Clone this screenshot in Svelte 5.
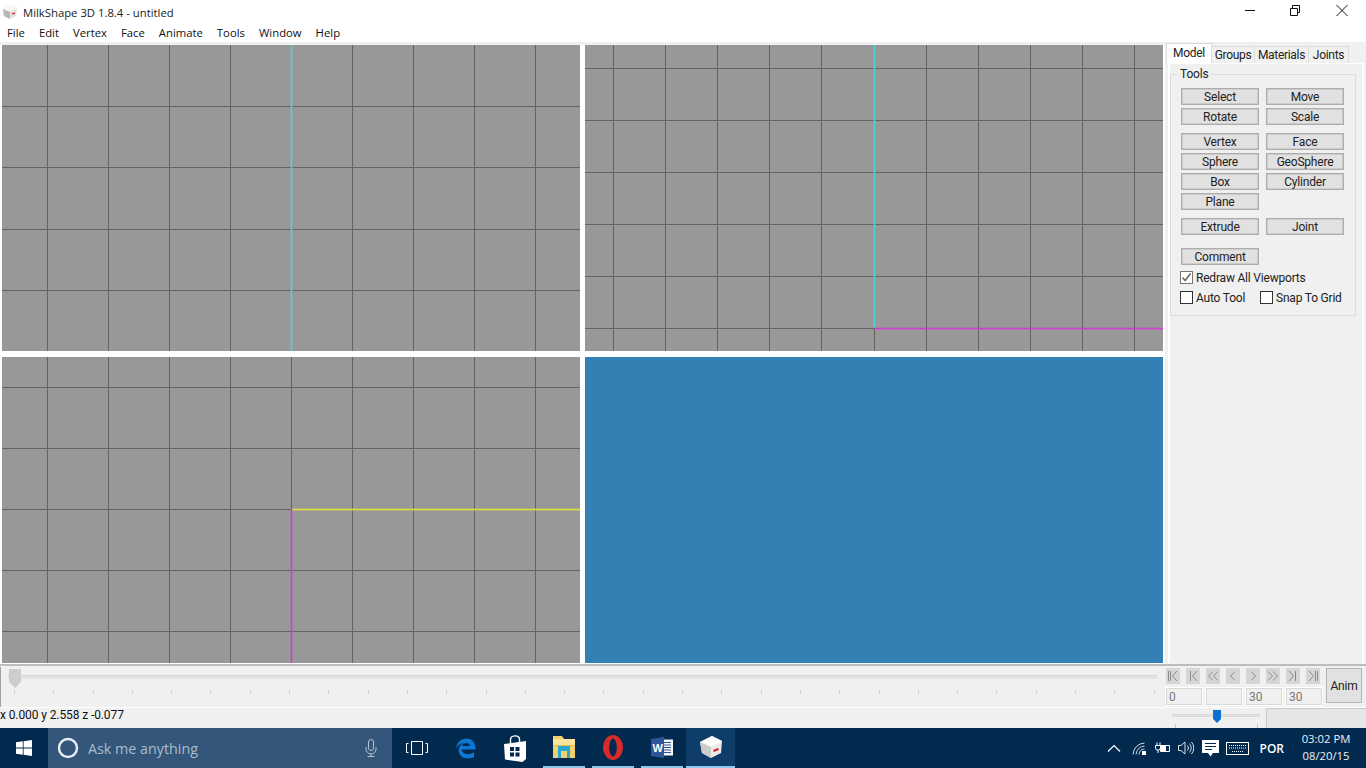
<script>
  const menus = ['File', 'Edit', 'Vertex', 'Face', 'Animate', 'Tools', 'Window', 'Help'];
  const tabs = ['Model', 'Groups', 'Materials', 'Joints'];
  const toolGroups = [
    { gap: 'g0', rows: [['Select', 'Move'], ['Rotate', 'Scale']] },
    { gap: 'g1', rows: [['Vertex', 'Face'], ['Sphere', 'GeoSphere'], ['Box', 'Cylinder'], ['Plane']] },
    { gap: 'g1', rows: [['Extrude', 'Joint']] },
    { gap: 'g2', rows: [['Comment']] }
  ];
  // grid offsets inside each 578x306 viewport, the axis lines are drawn apart
  const sideX = [45, 106, 167, 228, 350, 411, 472, 533];
  const frontX = [28, 80, 132, 184, 236, 341, 393, 445, 497, 549];
  const GRID = '#636363';
  const CYAN = '#4ed2d6';
  const MAGENTA = '#d23ad2';
  const YELLOW = '#e2e23c';
  const transport = ['first', 'prevkey', 'rew', 'prev', 'next', 'ff', 'nextkey', 'last'];
  const ticks = Array.from({ length: 30 }, (_, i) => i);
  const frames = ['0', '', '30', '30'];
</script>

{#snippet axis(x1, y1, x2, y2, color)}
  <line {x1} {y1} {x2} {y2} stroke={color} stroke-width="3" stroke-opacity="0.3" />
  <line {x1} {y1} {x2} {y2} stroke={color} />
{/snippet}

<div class="app">
  <header class="titlebar">
    <svg class="appicon" width="16" height="16" viewBox="0 0 16 16">
      <path d="M1 5 8 1l7 3-1 8-6 3-6-3z" fill="#e4e2e0" />
      <path d="M1 5l7 3 7-4-7-3z" fill="#f8f8f8" />
      <path d="M8 8v7l-6-3-1-7z" fill="#b9b7b5" />
      <path d="M10 10l3-1" stroke="#c44" stroke-width="1.4" />
    </svg>
    <span class="title">MilkShape 3D 1.8.4 - untitled</span>
    <div class="winctl">
      <svg width="46" height="22" viewBox="0 0 46 22"><path d="M18 10.500h10" stroke="#111" /></svg>
      <svg width="46" height="22" viewBox="0 0 46 22" fill="none" stroke="#111"><path d="M17.500 8.500h7v7h-7zM19.500 8.500v-3h7v7h-2" /></svg>
      <svg width="46" height="22" viewBox="0 0 46 22" stroke="#111"><path d="M17.500 5l11 11M28.500 5l-11 11" /></svg>
    </div>
  </header>

  <nav class="menubar">
    {#each menus as m}
      <span>{m}</span>
    {/each}
  </nav>

  <main class="workspace">
    <section class="views">
      <svg class="view" viewBox="0 0 578 306">
        {#each sideX as x}<line x1={x + 0.5} x2={x + 0.5} y1="0" y2="306" stroke={GRID} />{/each}
        {#each [61, 122, 184, 245] as y}<line x1="0" x2="578" y1={y + 0.5} y2={y + 0.5} stroke={GRID} />{/each}
        {@render axis(289.5, 0, 289.5, 306, CYAN)}
      </svg>
      <svg class="view" viewBox="0 0 578 306">
        {#each frontX as x}<line x1={x + 0.5} x2={x + 0.5} y1="0" y2="306" stroke={GRID} />{/each}
        {#each [23, 75, 127, 179, 231] as y}<line x1="0" x2="578" y1={y + 0.5} y2={y + 0.5} stroke={GRID} />{/each}
        <line x1="0" x2="289" y1="283.5" y2="283.5" stroke={GRID} />
        <line x1="289.5" x2="289.5" y1="283" y2="306" stroke={GRID} />
        {@render axis(289.5, 0, 289.5, 283, CYAN)}
        {@render axis(289.5, 283.5, 578, 283.5, MAGENTA)}
      </svg>
      <svg class="view" viewBox="0 0 578 306">
        {#each sideX as x}<line x1={x + 0.5} x2={x + 0.5} y1="0" y2="306" stroke={GRID} />{/each}
        {#each [30, 91, 213, 274] as y}<line x1="0" x2="578" y1={y + 0.5} y2={y + 0.5} stroke={GRID} />{/each}
        <line x1="0" x2="289" y1="152.5" y2="152.5" stroke={GRID} />
        <line x1="289.5" x2="289.5" y1="0" y2="152" stroke={GRID} />
        {@render axis(289.5, 152.5, 578, 152.5, YELLOW)}
        {@render axis(289.5, 152, 289.5, 306, MAGENTA)}
      </svg>
      <div class="view persp"></div>
    </section>

    <aside class="panel">
      <div class="tabs">
        {#each tabs as t, i}
          <span class="tab" class:active={i === 0}>{t}</span>
        {/each}
      </div>
      <div class="page">
        <fieldset class="tools">
          <legend>Tools</legend>
          {#each toolGroups as group}
            <div class="toolgroup {group.gap}">
              {#each group.rows as row}
                <div class="toolrow">
                  {#each row as label}
                    <button>{label}</button>
                  {/each}
                </div>
              {/each}
            </div>
          {/each}
          <label class="check first">
            <span class="box ticked">
              <svg width="11" height="11" viewBox="0 0 11 11"><path d="M1.500 5.500 4.200 8.500 9.500 1.500" fill="none" stroke="#666" stroke-width="1.500" /></svg>
            </span>
            Redraw All Viewports
          </label>
          <div class="checkrow">
            <label class="check"><span class="box"></span>Auto Tool</label>
            <label class="check"><span class="box"></span>Snap To Grid</label>
          </div>
        </fieldset>
      </div>
    </aside>
  </main>

  <section class="timeline">
    <div class="slider">
      <div class="track"></div>
      <svg class="thumb" width="12" height="19" viewBox="0 0 12 19"><path d="M0 0h12v13l-6 6-6-6z" fill="#cdcdcd" /></svg>
      <div class="ticks">
        {#each ticks as t}<i></i>{/each}
      </div>
    </div>
    <div class="transport">
      <div class="keys">
        {#each transport as k}
          <span class="key">
            <svg width="14" height="16" viewBox="0 0 14 16" fill="none" stroke="#8a8a8a">
              {#if k === 'first'}<path d="M2.500 3v10M4.500 3v10M11 3 6.500 8l4.500 5" />
              {:else if k === 'prevkey'}<path d="M4.500 3v10M11 3 6.500 8l4.500 5" />
              {:else if k === 'rew'}<path d="M7 3.500 2.500 8 7 12.500M12 3.500 7.500 8l4.500 4.500" />
              {:else if k === 'prev'}<path d="M9 3.500 4.500 8 9 12.500" />
              {:else if k === 'next'}<path d="M5 3.500 9.500 8 5 12.500" />
              {:else if k === 'ff'}<path d="M2 3.500 6.500 8 2 12.500M7 3.500 11.500 8 7 12.500" />
              {:else if k === 'nextkey'}<path d="M3 3 7.500 8 3 13M9.500 3v10" />
              {:else}<path d="M3 3 7.500 8 3 13M9.500 3v10M11.500 3v10" />{/if}
            </svg>
          </span>
        {/each}
      </div>
      <div class="frames">
        {#each frames as f}<span class="frame">{f}</span>{/each}
      </div>
    </div>
    <button class="anim">Anim</button>
  </section>

  <footer class="status">
    <span class="coords">x 0.000 y 2.558 z -0.077</span>
    <div class="speed">
      <div class="speedtrack"></div>
      <svg class="speedthumb" width="8" height="13" viewBox="0 0 8 13"><path d="M0 0h8v9l-4 4-4-4z" fill="#0a6fd0" /></svg>
      <i class="speedtick left"></i>
      <i class="speedtick right"></i>
    </div>
    <div class="statusbox"></div>
  </footer>

  <div class="taskbar">
    <div class="start">
      <svg width="16" height="16" viewBox="0 0 16 16" fill="#fff"><path d="M0 2.300 6.800 1.300v6.300H0zM7.600 1.200 16 0v7.600H7.600zM0 8.400h6.800v6.300L0 13.700zM7.600 8.400H16V16l-8.400-1.200z" /></svg>
    </div>
    <div class="search">
      <svg width="22" height="22" viewBox="0 0 22 22"><circle cx="11" cy="11" r="9" fill="none" stroke="#e8eef3" stroke-width="2.400" /></svg>
      <span class="ask">Ask me anything</span>
      <svg class="mic" width="12" height="18" viewBox="0 0 12 18" fill="none" stroke="#b3c2cf"><rect x="3.500" y="0.500" width="5" height="11" rx="2.500" /><path d="M1 8v2a5 5 0 0 0 10 0V8M6 15v2.500M2.500 17.500h7" /></svg>
    </div>
    <div class="apps">
      <span class="app-btn">
        <svg width="22" height="14" viewBox="0 0 22 14" fill="none" stroke="#fff"><path d="M5.500 .5h11v13h-11zM2.500 2.500h-2v9h2M19.500 2.500h2v9h-2" /></svg>
      </span>
      <span class="app-btn">
        <svg width="21" height="23" viewBox="0 0 22 22"><path d="M1 11C2 4 7 .5 12 .5c6 0 9.500 4.500 9.500 11.500H7c.3 5 7.500 6.500 13 3v5c-7 3.500-17 1-16-8 .3-3 2-5.500 5-7-3 .8-6.500 3-8 6zM7.200 8.500h8.600C15.500 4 8 4 7.200 8.500z" fill="#0a78d4" /></svg>
      </span>
      <span class="app-btn">
        <svg width="22" height="27" viewBox="0 0 22 27"><path d="M0 9 22 6v18l-3.500 3L1 24.500z" fill="#fff" /><path d="M6.500 9V4.500c0-4.500 9-5 9-.5v4" fill="none" stroke="#fff" stroke-width="1.400" /><path d="M6 12h4v4H6zM11.500 12h4v4h-4zM6 17.500h4v4H6zM11.500 17.500h4v4h-4z" fill="#012a4e" /></svg>
      </span>
      <span class="app-btn underline">
        <svg width="22" height="22" viewBox="0 0 22 22"><path d="M0 0h9l2 3h11v19H0z" fill="#f2d06e" /><path d="M0 3h22v6H0z" fill="#f8e49c" /><path d="M5 10h12v12h-3v-7H8v7H5z" fill="#27a9d6" /><path d="M0 9h22v1H0z" fill="#e5b94e" /></svg>
      </span>
      <span class="app-btn underline">
        <svg width="20" height="25" viewBox="0 0 20 25"><ellipse cx="10" cy="12.500" rx="10" ry="12.500" fill="#d92a2a" /><ellipse cx="10" cy="12.500" rx="3.800" ry="9" fill="#012a4e" /></svg>
      </span>
      <span class="app-btn underline">
        <svg width="22" height="21" viewBox="0 0 22 21"><path d="M11 2.500h11v16H11z" fill="#f4f6fa" /><path d="M13 5.500h7M13 8h7M13 10.500h7M13 13h7M13 15.500h7" stroke="#2b579a" /><path d="M0 2 13 0v21L0 19z" fill="#2b579a" /><text class="wglyph" x="1.500" y="14.500">W</text></svg>
      </span>
      <span class="app-btn current">
        <svg width="24" height="24" viewBox="0 0 24 24"><path d="M1 7 13 1l10 5-1 12-10 5-9-5z" fill="#eeecea" /><path d="M1 7l11 5 11-6-10-5z" fill="#fcfcfc" /><path d="M12 12v11l-9-5-2-11z" fill="#cfcdcb" /><path d="M14.500 16l5-2" stroke="#c22" stroke-width="2" /></svg>
      </span>
    </div>
    <div class="tray">
      <svg width="14" height="8" viewBox="0 0 14 8" fill="none" stroke="#fff" stroke-width="1.200"><path d="M1 7.500 7 1.500l6 6" /></svg>
      <svg class="t1" width="15" height="13" viewBox="0 0 15 13" fill="none" stroke="#d5dde5"><path d="M1 12.500A12 12 0 0 1 12.500 1M4 12.500A9 9 0 0 1 12.500 4M7 12.500A6 6 0 0 1 12.500 7" /><rect x="10" y="9" width="4" height="4" fill="#fff" stroke="none" /></svg>
      <svg class="t2" width="15" height="12" viewBox="0 0 15 12" fill="none" stroke="#fff"><path d="M5.500 3.500h9v6h-9zM2 .5v3M5 .5v3M.5 3.500h5V6a2 2 0 0 1-2 2h-1a2 2 0 0 1-2-2zM3 8v3" /><rect x="6" y="4" width="5" height="5" fill="#fff" stroke="none" /></svg>
      <svg class="t3" width="16" height="14" viewBox="0 0 16 14" fill="none" stroke="#d5dde5"><path d="M.5 4.500h2.500L7 1v12L3 9.500H.5zM9.500 4.500a4 4 0 0 1 0 5M11.500 2.500a7 7 0 0 1 0 9M13.500 1a9 9 0 0 1 0 12" /></svg>
      <svg class="t4" width="17" height="17" viewBox="0 0 17 17"><path d="M0 0h17v13h-6l-2.500 3.500L6 13H0z" fill="#fff" /><path d="M3 3.500h11M3 6.500h11M3 9.500h7" stroke="#012a4e" /></svg>
      <svg class="t5" width="23" height="13" viewBox="0 0 23 13" fill="none" stroke="#fff"><rect x=".5" y=".5" width="22" height="12" /><path d="M3 3.500h17M3 6h17M6 9.500h11" stroke-dasharray="1 1" /></svg>
      <span class="lang">POR</span>
      <span class="clock"><span>03:02 PM</span><span>08/20/15</span></span>
    </div>
  </div>
</div>

<style>
  :global(body) {
    margin: 0;
    background: #fff;
  }

  .app {
    width: 1366px;
    height: 768px;
    display: flex;
    flex-direction: column;
    overflow: hidden;
    font-family: Roboto, "Liberation Sans", sans-serif;
    color: #111;
  }

  .titlebar {
    height: 22px;
    flex-shrink: 0;
    display: flex;
    align-items: center;
    background: #fff;
    padding-left: 2px;
    padding-top: 2px;
    box-sizing: border-box;
  }

  .appicon {
    margin-right: 5px;
  }

  .title {
    font-family: "Open Sans", sans-serif;
    font-size: 11.300px;
    color: #222;
  }

  .winctl {
    margin-left: auto;
    display: flex;
    align-self: flex-start;
    margin-top: -2px;
    padding-right: 1px;
  }

  .menubar {
    height: 20px;
    flex-shrink: 0;
    display: flex;
    align-items: center;
    gap: 14px;
    padding-left: 7px;
    background: #fff;
    font-family: "Open Sans", sans-serif;
    font-size: 11.300px;
  }

  .workspace {
    height: 622px;
    flex-shrink: 0;
    display: flex;
    background: #f0f0f0;
  }

  .views {
    width: 1165px;
    flex-shrink: 0;
    display: grid;
    grid-template-columns: 578px 578px;
    grid-template-rows: 306px 306px;
    column-gap: 5px;
    row-gap: 6px;
    padding: 3px 0 0 2px;
    box-sizing: border-box;
    background: linear-gradient(#f0f0f0 3px, #fff 3px);
  }

  .view {
    display: block;
    width: 578px;
    height: 306px;
    background: #989898;
  }

  .persp {
    background: #3380b5;
  }

  .panel {
    flex: 1;
    padding: 1px 2px 0 1px;
    display: flex;
    flex-direction: column;
    font-size: 12px;
    letter-spacing: -0.2px;
  }

  .tabs {
    display: grid;
    grid-template-columns: 46px 43px 54px 40px;
    height: 20px;
    align-items: end;
    letter-spacing: -0.3px;
  }

  .tab {
    height: 17px;
    display: flex;
    align-items: center;
    justify-content: center;
    border: 1px solid #dcdcdc;
    border-bottom: none;
    border-left: none;
    box-sizing: border-box;
    background: #f0f0f0;
    color: #222;
  }

  .tab.active {
    height: 20px;
    background: #fff;
    border-left: 1px solid #dcdcdc;
    padding-bottom: 2px;
  }

  .page {
    flex: 1;
    border: 1px solid #fff;
    border-width: 1px 2px 0;
    margin-left: 2px;
    padding: 4px 6px 0 0;
    margin-bottom: 1px;
  }

  .tools {
    margin: 0;
    padding: 0 0 11px 10px;
    border: 1px solid #dcdcdc;
    min-width: 0;
    height: 248px;
    box-sizing: border-box;
    display: block;
  }

  .tools legend {
    padding: 0 3px;
    margin-left: -4px;
    line-height: 12px;
    color: #222;
  }

  .toolgroup {
    display: flex;
    flex-direction: column;
    gap: 3px;
  }

  .g0 {
    margin-top: 8px;
  }

  .g1 {
    margin-top: 8px;
  }

  .g2 {
    margin-top: 13px;
  }

  .toolrow {
    display: flex;
    gap: 7px;
  }

  button {
    width: 78px;
    height: 17px;
    padding: 0;
    border: 1px solid #adadad;
    box-shadow: inset 0 0 0 0.5px #b8b8b8;
    background: #e1e1e1;
    color: #222;
    font: 12px Roboto, "Liberation Sans", sans-serif;
    letter-spacing: -0.2px;
  }

  .check {
    display: flex;
    align-items: center;
    gap: 3px;
    height: 13px;
    color: #222;
  }

  .check.first {
    margin-top: 6px;
    margin-left: -1px;
  }

  .checkrow {
    display: grid;
    grid-template-columns: 80px auto;
    margin-top: 7px;
    margin-left: -1px;
  }

  .box {
    width: 11px;
    height: 11px;
    border: 1px solid #333;
    background: #fff;
    display: block;
  }

  .box.ticked {
    border-color: #777;
  }

  .box svg {
    display: block;
  }

  .timeline {
    height: 43px;
    flex-shrink: 0;
    display: flex;
    background: #f0f0f0;
    border-top: 2px solid #bdbdbd;
    box-sizing: border-box;
    padding-top: 1px;
  }

  .slider {
    position: relative;
    width: 1165px;
    flex-shrink: 0;
    border-left: 1px solid #a0a0a0;
    box-sizing: border-box;
  }

  .track {
    position: absolute;
    left: 7px;
    right: 8px;
    top: 8px;
    height: 3px;
    background: #e3e3e3;
    border-top: 1px solid #d6d6d6;
  }

  .thumb {
    position: absolute;
    left: 8px;
    top: 2px;
  }

  .ticks {
    position: absolute;
    left: 13px;
    top: 23px;
    display: flex;
    gap: 38.300px;
  }

  .ticks i {
    width: 1px;
    height: 4px;
    background: #cfcfcf;
  }

  .transport {
    width: 160px;
    flex-shrink: 0;
    padding-top: 1px;
  }

  .keys {
    display: flex;
    gap: 6px;
    padding-left: 1px;
  }

  .key {
    width: 14px;
    height: 16px;
    background: #d6d6d6;
    display: block;
  }

  .key svg {
    display: block;
  }

  .frames {
    display: flex;
    gap: 2px;
    margin-top: 3px;
  }

  .frame {
    width: 38px;
    height: 19px;
    border: 1px solid #fff;
    outline: 1px solid #d8d8d8;
    outline-offset: -2px;
    box-sizing: border-box;
    background: #f0f0f0;
    padding-left: 3px;
    line-height: 18px;
    font-size: 12px;
    color: #777;
  }

  .anim {
    width: 36px;
    height: 35px;
    margin-left: 1px;
    margin-top: 1px;
    background: #e1e1e1;
    border: 1px solid #b4b4b4;
    box-shadow: none;
  }

  .status {
    height: 21px;
    flex-shrink: 0;
    display: flex;
    align-items: stretch;
    background: #f0f0f0;
    border-top: 1px solid #fff;
    box-sizing: border-box;
    font-size: 12px;
  }

  .coords {
    line-height: 15px;
    letter-spacing: -0.1px;
    color: #111;
  }

  .speed {
    position: relative;
    margin-left: auto;
    width: 94px;
  }

  .speedtrack {
    position: absolute;
    left: 0;
    right: 6px;
    top: 6px;
    height: 3px;
    background: #e6e6e6;
    border: 1px solid #d8d8d8;
    box-sizing: border-box;
  }

  .speedthumb {
    position: absolute;
    left: 41px;
    top: 2px;
  }

  .speedtick {
    position: absolute;
    top: 16px;
    width: 1px;
    height: 4px;
    background: #c8c8c8;
  }

  .speedtick.left {
    left: 3px;
  }

  .speedtick.right {
    left: 85px;
  }

  .statusbox {
    width: 100px;
    background: #e6e6e6;
    border-left: 1px solid #c8c8c8;
    border-top: 1px solid #c8c8c8;
    box-sizing: border-box;
  }

  .taskbar {
    height: 40px;
    flex-shrink: 0;
    display: flex;
    align-items: stretch;
    background: #012a4e;
    color: #fff;
    font-family: "Open Sans", sans-serif;
  }

  .start {
    width: 48px;
    flex-shrink: 0;
    display: flex;
    align-items: center;
    justify-content: center;
  }

  .search {
    width: 344px;
    flex-shrink: 0;
    display: flex;
    align-items: center;
    background: #33567a;
    padding-left: 9px;
    box-sizing: border-box;
  }

  .ask {
    margin-left: 9px;
    font-size: 14.300px;
    color: #a9bccc;
  }

  .mic {
    margin-left: auto;
    margin-right: 15px;
  }

  .apps {
    display: flex;
  }

  .app-btn {
    width: 49px;
    display: flex;
    align-items: center;
    justify-content: center;
    box-sizing: border-box;
  }

  .underline {
    border-bottom: 2px solid transparent;
    border-image: linear-gradient(90deg, transparent 5px, #8fc6ec 5px, #8fc6ec 45px, transparent 45px) 1;
  }

  .current {
    background: #0e3d69;
    border-bottom: 2px solid #8fc6ec;
  }

  .wglyph {
    font: bold 11px "Liberation Sans", sans-serif;
    fill: #fff;
  }

  .tray {
    margin-left: auto;
    display: flex;
    align-items: center;
    padding-right: 16px;
  }

  .t1 {
    margin-left: 11px;
  }

  .t2 {
    margin-left: 8px;
  }

  .t3 {
    margin-left: 8px;
  }

  .t4 {
    margin-left: 8px;
  }

  .t5 {
    margin-left: 7px;
  }

  .lang {
    margin-left: 11px;
    font-size: 12px;
    font-weight: 600;
  }

  .clock {
    margin-left: 18px;
    width: 48px;
    display: flex;
    flex-direction: column;
    align-items: center;
    font-size: 11.300px;
    line-height: 17px;
    padding-bottom: 3px;
    white-space: nowrap;
    color: #eef2f5;
  }
</style>
